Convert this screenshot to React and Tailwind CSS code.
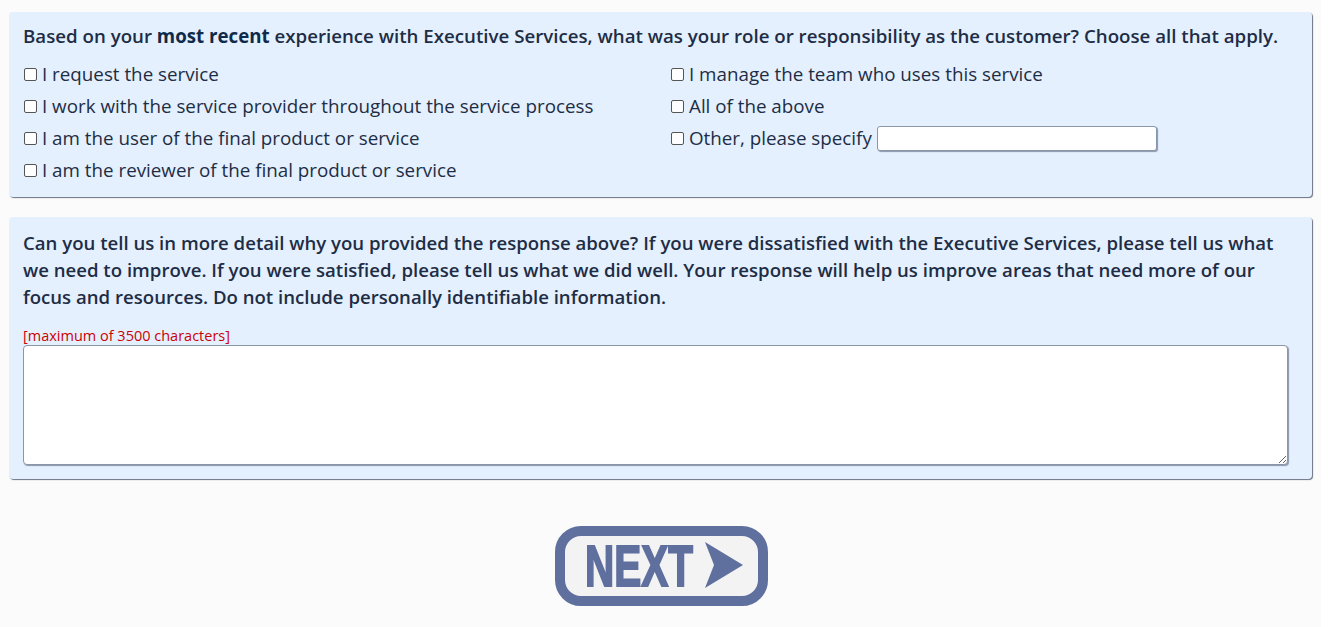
import React from 'react';

const Option = ({ label, children }) => (
  <label className="flex items-center h-[32px] text-[18.8px] text-[#1e2d45]">
    <input type="checkbox" className="w-[13px] h-[13px] mr-[5px] ml-[1px] appearance-none border border-[#555] rounded-[2px] bg-white" />
    <span>{label}</span>
    {children}
  </label>
);

const NextButton = () => (
  <button className="flex items-center w-[213px] h-[80px] rounded-[26px] border-[10px] border-[#5f6f9e] bg-[#f3f3f3] pl-[20px]">
    <span className="block w-[108px] h-[44px] overflow-visible">
      <span className="inline-block origin-top-left scale-x-[0.71] text-[57px] font-bold leading-[44px] text-[#5f6f9e] [-webkit-text-stroke:2px_#5f6f9e] font-['Liberation_Sans',sans-serif] whitespace-nowrap">
        NEXT
      </span>
    </span>
    <svg width="39" height="46" viewBox="0 0 39 46" className="ml-[12px] -mt-[2px]">
      <path d="M0 0 L38 23 L0 46 L9 23 Z" fill="#5f6f9e" />
    </svg>
  </button>
);

export default function App() {
  return (
    <div className="min-h-[627px] bg-[#fbfbfb] pt-[12px] px-[9px] font-['Open_Sans',sans-serif] text-[#1e2d45] w-[1321px]">
      <div className="bg-[#e4f0fe] rounded-[4px] shadow-[1px_1px_1px_rgba(70,80,100,0.8)] px-[14px] pt-[11px] pb-[11px]">
        <p className="text-[18.7px] font-semibold leading-[26px] mb-[9px] whitespace-nowrap">
          Based on your <b className="font-bold text-[#0f2a4a]">most recent</b> experience with Executive Services, what was your role or responsibility as the customer? Choose all that apply.
        </p>
        <div className="grid grid-cols-[647px_1fr]">
          <Option label="I request the service" />
          <Option label="I manage the team who uses this service" />
          <Option label="I work with the service provider throughout the service process" />
          <Option label="All of the above" />
          <Option label="I am the user of the final product or service" />
          <Option label="Other, please specify">
            <input type="text" className="ml-[5px] w-[280px] h-[25px] bg-white border border-[#8a97aa] rounded-[3px] shadow-[1px_1px_1px_rgba(80,90,110,0.6)]" />
          </Option>
          <Option label="I am the reviewer of the final product or service" />
        </div>
      </div>

      <div className="mt-[20px] bg-[#e4f0fe] rounded-[4px] shadow-[1px_1px_1px_rgba(70,80,100,0.8)] px-[14px] pt-[12px] pb-[14px]">
        <p className="text-[18.6px] font-semibold leading-[27px] pr-[10px]">
          Can you tell us in more detail why you provided the response above? If you were dissatisfied with the Executive Services, please tell us what we need to improve. If you were satisfied, please tell us what we did well. Your response will help us improve areas that need more of our focus and resources. Do not include personally identifiable information.
        </p>
        <div className="mt-[17px] text-[14.5px] leading-[18px] text-[#cc0000]">[maximum of 3500 characters]</div>
        <textarea className="block w-[1265px] h-[120px] bg-white border border-[#8a97aa] rounded-[4px] shadow-[1px_1px_1px_rgba(80,90,110,0.6)] resize" />
      </div>

      <div className="flex justify-center mt-[47px] pl-[2px]">
        <NextButton />
      </div>
    </div>
  );
}
